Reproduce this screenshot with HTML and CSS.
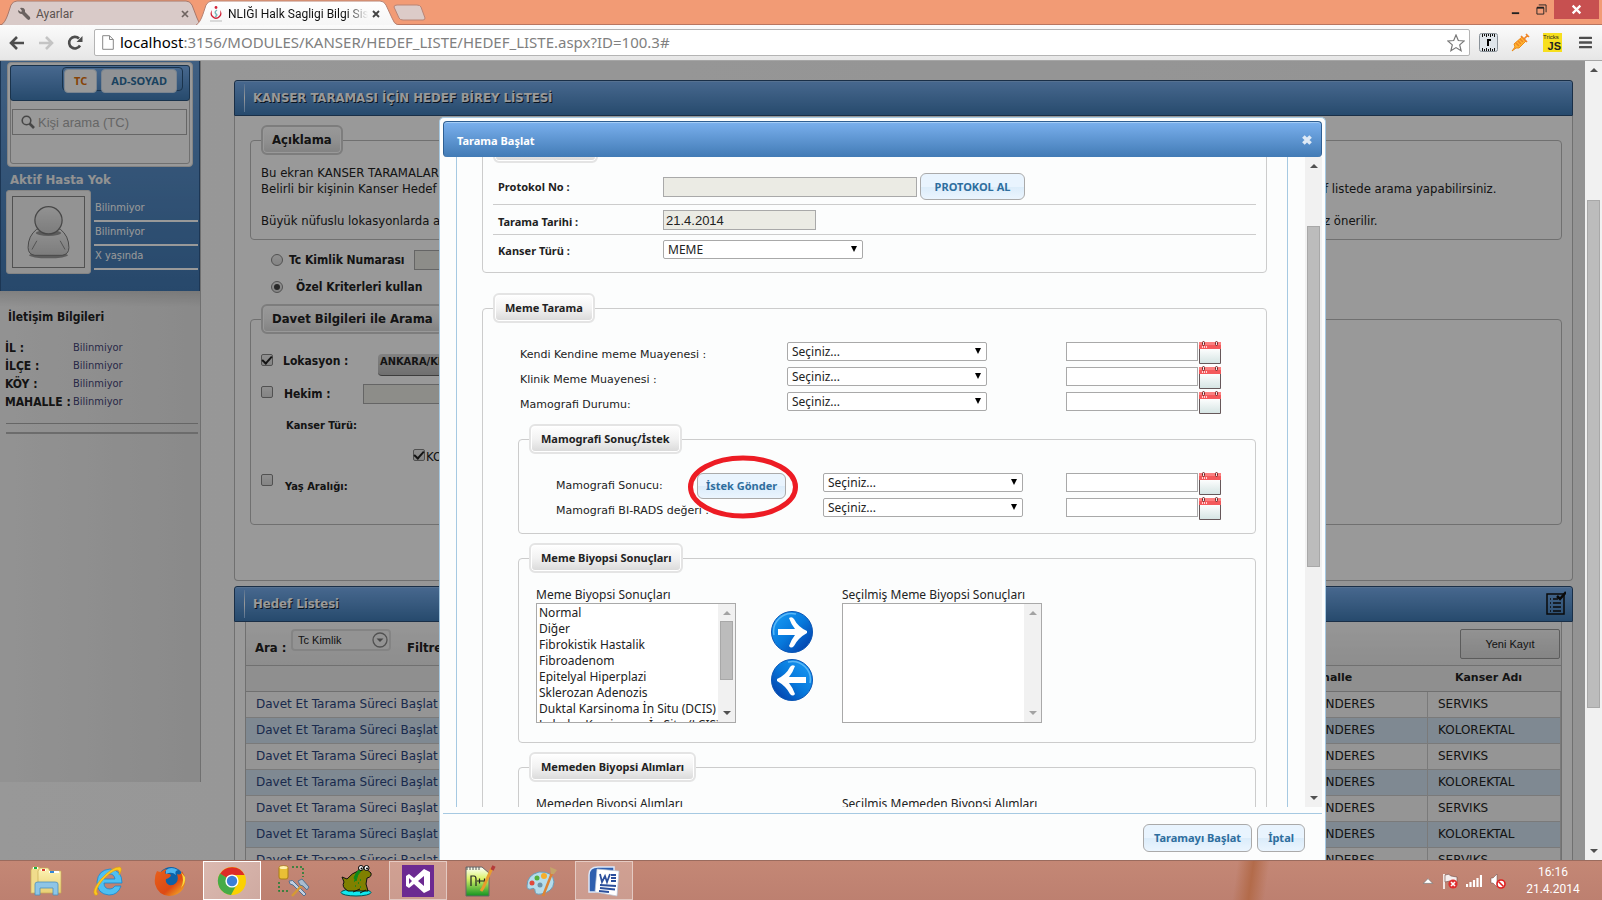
FILE: index.html
```html
<!DOCTYPE html>
<html lang="tr">
<head>
<meta charset="utf-8">
<title>Halk Sagligi Bilgi Sistemi</title>
<link rel="stylesheet" href="styles.css">
</head>
<body>
<svg class="defs" aria-hidden="true">
  <defs>
    <linearGradient id="gWhite" x1="0" y1="0" x2="0" y2="1"><stop offset="0" stop-color="#fff"/><stop offset="1" stop-color="#d3e3e2"/></linearGradient>
    <linearGradient id="gTab" x1="0" y1="0" x2="0" y2="1"><stop offset="0" stop-color="#fff"/><stop offset="1" stop-color="#f6f6f6"/></linearGradient>
    <linearGradient id="gBlue" x1="0" y1="0" x2="1" y2="1"><stop offset="0" stop-color="#1ba0f8"/><stop offset=".5" stop-color="#0779dc"/><stop offset="1" stop-color="#0334a0"/></linearGradient>
    <linearGradient id="gGreen" x1="0" y1="0" x2="0" y2="1"><stop offset="0" stop-color="#fff"/><stop offset=".4" stop-color="#d9f26a"/><stop offset="1" stop-color="#119320"/></linearGradient>
    <linearGradient id="gFolder" x1="0" y1="0" x2="0" y2="1"><stop offset="0" stop-color="#fdf3b4"/><stop offset="1" stop-color="#e8cf74"/></linearGradient>
    <linearGradient id="gFox" x1="0" y1="0" x2="1" y2="1"><stop offset="0" stop-color="#e8601c"/><stop offset=".6" stop-color="#dd4a14"/><stop offset="1" stop-color="#f9c52c"/></linearGradient>
    <linearGradient id="gMan" x1="0" y1="0" x2="0" y2="1"><stop offset="0" stop-color="#f4f4f4"/><stop offset="1" stop-color="#cfcfcf"/></linearGradient>
    <symbol id="calendar" viewBox="0 0 22 24">
      <rect x="1" y="7" width="20" height="16" fill="url(#gWhite)"/>
      <path d="M.5 7V22.500H21.500V7" fill="none" stroke="#66585a"/>
      <rect y="1" width="22" height="7" fill="#f4595b"/><rect y="1" width="22" height="3" fill="#fb7f7f"/>
      <path d="M3 6h1M5 6h1M7 6h1" stroke="#fff" stroke-width="1.500"/>
      <rect x="3.500" y=".5" width="2" height="4" rx="1" fill="#eee" stroke="#722"/><rect x="16.500" y=".5" width="2" height="4" rx="1" fill="#eee" stroke="#722"/>
    </symbol>
    <symbol id="arrow" viewBox="0 0 42 42">
      <circle cx="21" cy="21" r="20.500" fill="url(#gBlue)" stroke="#0a55b4"/>
      <path d="M3 24A18 18 0 0 1 25 3" fill="none" stroke="#6dc2fa" stroke-width="1.500" opacity=".8"/>
      <path d="M7 18H24Q20 13 18 7Q21 5 23 8Q27 16 36 20V22Q27 27 23 35Q20 38 18 35Q20 29 24 24H7Z" fill="#fff"/>
    </symbol>
  </defs>
</svg>

<header class="tabstrip">
  <div class="tab tab-idle">
    <svg class="tab-shape" viewBox="0 0 200 25" preserveAspectRatio="none"><path d="M1 25Q5 23 8 14L11 5Q13 1 17 1H186Q190 1 192 5L197 18Q199 24 202 25" fill="#d9cac8" stroke="#a87769"/></svg>
    <svg class="tab-icon" viewBox="0 0 14 14"><path d="M1 3L4 5 5 4 3 1Q7 0 8 3V5L13 10Q14 12 12 13Q11 13 10 12L5 7Q1 7 1 3Z" fill="#6b6260"/></svg>
    <span class="tab-title">Ayarlar</span>
    <button class="tab-close" aria-label="Sekmeyi kapat"><svg viewBox="0 0 8 8"><path d="M1 1L7 7M7 1L1 7" stroke="#6f6461" stroke-width="1.700"/></svg></button>
  </div>
  <div class="tab tab-active">
    <svg class="tab-shape" viewBox="0 0 202 25" preserveAspectRatio="none"><path d="M0 25Q4 23 7 14L10 5Q12 1 16 1H184Q188 1 190 5L196 18Q198 24 202 25" fill="url(#gTab)" stroke="#b78273"/></svg>
    <svg class="tab-icon" viewBox="0 0 14 16"><circle cx="7" cy="1.500" r="1.400" fill="#d5233a"/><path d="M3 4Q0 8 3 11Q7 15 11 11Q14 8 11 4Q12 8 10 10Q7 13 4 10Q2 8 3 4Z" fill="#cf1f35"/><path d="M8 4Q5 6 7 8Q9 9 6 11" fill="none" stroke="#7ab9b9" stroke-width="1.500"/><path d="M1 15H13" stroke="#bbb"/></svg>
    <span class="tab-title fade">NLIĞI Halk Sagligi Bilgi Sis</span>
    <button class="tab-close" aria-label="Sekmeyi kapat"><svg viewBox="0 0 8 8"><path d="M1 1L7 7M7 1L1 7" stroke="#444" stroke-width="1.900"/></svg></button>
  </div>
  <button class="newtab" aria-label="Yeni sekme"><svg viewBox="0 0 34 17"><path d="M4 1H24Q27 1 28 3L32 14Q32 16 30 16H10Q7 16 6 14L1 3Q1 1 4 1Z" fill="#dccbc8" stroke="#b98475"/></svg></button>
  <div class="win-controls">
    <button aria-label="Küçült"><svg viewBox="0 0 10 12"><path d="M1 10H9" stroke="#222" stroke-width="2"/></svg></button>
    <button aria-label="Önceki boyut"><svg viewBox="0 0 12 12"><path d="M1 4H8.500V11H1Z" fill="none" stroke="#222"/><path d="M1 4H8.500" stroke="#222" stroke-width="2"/><path d="M3 1H11V9" fill="none" stroke="#222"/></svg></button>
    <button class="win-close" aria-label="Kapat"><svg viewBox="0 0 10 10"><path d="M1.500 1.500L8.500 8.500M8.500 1.500L1.500 8.500" stroke="#fff" stroke-width="2"/></svg></button>
  </div>
</header>

<nav class="toolbar">
  <button aria-label="Geri"><svg viewBox="0 0 16 14"><path d="M8 1L2 7L8 13M2 7H15" fill="none" stroke="#4d4d4d" stroke-width="2.600"/></svg></button>
  <button aria-label="İleri"><svg viewBox="0 0 16 14"><path d="M8 1L14 7L8 13M14 7H1" fill="none" stroke="#c4c4c4" stroke-width="2.600"/></svg></button>
  <button aria-label="Yenile"><svg viewBox="0 0 16 16"><path d="M13 10.500A5.800 5.800 0 1 1 12 3.500" fill="none" stroke="#4d4d4d" stroke-width="2.600"/><path d="M15.500 1V7H9.500Z" fill="#4d4d4d"/></svg></button>
  <div class="omnibox">
    <svg class="page-icon" viewBox="0 0 12 15"><path d="M.7.7H7.500L11.300 4.500V14.300H.7ZM7.500.7V4.500H11.300" fill="#fff" stroke="#888"/></svg>
    <label class="url" for="url"><b>localhost</b>:3156/MODULES/KANSER/HEDEF_LISTE/HEDEF_LISTE.aspx?ID=100.3#</label>
    <input id="url" class="url-input" aria-label="Adres">
    <svg class="star" viewBox="0 0 18 18"><path d="M9 1L11.300 6.500L17.200 7L12.700 10.900L14.100 16.700L9 13.600L3.900 16.700L5.300 10.900L.8 7L6.700 6.500Z" fill="#fff" stroke="#777" stroke-width="1.200"/></svg>
  </div>
  <button class="ext" aria-label="Cetvel"><svg viewBox="0 0 19 19"><rect x=".5" y=".5" width="18" height="18" rx="2" fill="#dfe5ea" stroke="#8a9299"/><path d="M3.500 1v3M5.500 1v2M7.500 1v3M9.500 1v2M11.500 1v3M13.500 1v2M15.500 1v3M3.500 15v3M5.500 16v2M7.500 15v3M9.500 16v2M11.500 15v3M13.500 16v2M15.500 15v3" stroke="#111"/><path d="M8 7h4M9 6v7" stroke="#000" stroke-width="2"/></svg></button>
  <button class="ext" aria-label="Şırınga"><svg viewBox="0 0 19 19"><path d="M1 18L4 14L3 11L11 4L15 8L8 15L5 15Z" fill="#ffb52f" stroke="#e98a1a"/><path d="M10 3L16 9M13 6L17 2M15 1L18 4M5 10L8 13M7 8L10 11M9 6L12 9" stroke="#f08527" stroke-width="1.600"/></svg></button>
  <span class="ext jsext"><i>Tricks</i><b>JS</b></span>
  <button class="ext menu" aria-label="Menü"><svg viewBox="0 0 14 14"><path d="M1 2H13M1 7H13M1 12H13" stroke="#4d4d4d" stroke-width="2.600" stroke-linecap="round"/></svg></button>
</nav>

<div class="viewport">
<div class="page">
  <aside class="sidebar">
    <section class="patient">
      <div class="search-card">
        <div class="search-inner">
          <div class="search-head"><div class="search-tabs"><button class="on">TC</button><button>AD-SOYAD</button></div></div>
          <div class="search-field">
            <svg viewBox="0 0 14 14"><circle cx="5.500" cy="5.500" r="4.300" fill="none" stroke="#777" stroke-width="1.600"/><path d="M8.500 8.500L13 13" stroke="#777" stroke-width="2.600"/></svg>
            <input placeholder="Kişi arama (TC)" aria-label="Kişi arama">
          </div>
        </div>
      </div>
      <h2>Aktif Hasta Yok</h2>
      <div class="patient-row">
        <div class="photo"><svg viewBox="0 0 72 72"><ellipse cx="36" cy="60" rx="20" ry="3" fill="#999"/><path d="M24 33Q15 40 15 52Q15 59 22 60H50Q57 59 57 52Q57 40 48 33Z" fill="url(#gMan)" stroke="#777"/><path d="M19 54L24 45M53 54L48 45" stroke="#888"/><ellipse cx="36" cy="37" rx="13" ry="3" fill="#999"/><circle cx="36" cy="24" r="14" fill="url(#gMan)" stroke="#777" stroke-width="1.300"/></svg></div>
        <ul><li>Bilinmiyor</li><li>Bilinmiyor</li><li>X yaşında</li></ul>
      </div>
    </section>
    <section class="contact">
      <h3>İletişim Bilgileri</h3>
      <dl>
        <dt>İL :</dt><dd>Bilinmiyor</dd>
        <dt>İLÇE :</dt><dd>Bilinmiyor</dd>
        <dt>KÖY :</dt><dd>Bilinmiyor</dd>
        <dt>MAHALLE :</dt><dd>Bilinmiyor</dd>
      </dl>
      <div class="rules"></div>
    </section>
  </aside>

  <main class="main">
    <h1 class="bar">KANSER TARAMASI İÇİN HEDEF BİREY LİSTESİ</h1>
    <section class="panel">
      <fieldset class="fs about">
        <legend>Açıklama</legend>
        <p><span>Bu ekran KANSER TARAMALARI</span></p>
        <p><span>Belirli bir kişinin Kanser Hedef li</span><span>f listede arama yapabilirsiniz.</span></p>
        <p class="spaced"><span>Büyük nüfuslu lokasyonlarda ara</span><span>z önerilir.</span></p>
      </fieldset>
      <div class="radios">
        <div class="radio-row"><input type="radio" name="k" id="r1"><label for="r1">Tc Kimlik Numarası</label><input class="dis" aria-label="Tc Kimlik Numarası" readonly></div>
        <div class="radio-row second"><input type="radio" name="k" id="r2" checked><label for="r2">Özel Kriterleri kullan</label></div>
      </div>
      <fieldset class="fs invite">
        <legend>Davet Bilgileri ile Arama</legend>
        <div class="crit lok"><input type="checkbox" id="c1" checked><label for="c1">Lokasyon :</label><button>ANKARA/KE</button></div>
        <div class="crit hek"><input type="checkbox" id="c2"><label for="c2">Hekim :</label><input class="dis" aria-label="Hekim" readonly></div>
        <div class="crit kan"><b>Kanser Türü:</b></div>
        <div class="crit kol"><input type="checkbox" id="c3" checked><label for="c3">KO</label></div>
        <div class="crit yas"><input type="checkbox" id="c4"><label for="c4">Yaş Aralığı:</label></div>
      </fieldset>
    </section>

    <h1 class="bar list-bar">Hedef Listesi
      <svg viewBox="0 0 20 24"><path d="M1 3H18V23H1Z" fill="none" stroke="#111" stroke-width="1.500"/><path d="M4 8h1M4 12h1M4 16h1M4 20h1M7 8h5M7 12h8M7 16h8M7 20h8" stroke="#111" stroke-width="1.500"/><path d="M11 5L14 8L20 1" fill="none" stroke="#111" stroke-width="2.500"/></svg>
    </h1>
    <section class="panel list-panel">
      <div class="grid-box">
        <div class="grid-tools">
          <label for="ara">Ara :</label>
          <span class="round-select"><select id="ara"><option>Tc Kimlik</option></select><svg viewBox="0 0 16 16"><circle cx="8" cy="8" r="7" fill="none" stroke="#888" stroke-width="1.300"/><path d="M4.500 6.500H11.500L8 10Z" fill="#777"/></svg></span>
          <b>Filtre</b>
          <button>Yeni Kayıt</button>
        </div>
        <table>
          <thead><tr><th></th><th class="c-mah">Mahalle</th><th class="c-kan">Kanser Adı</th></tr></thead>
          <tbody>
            <tr><td><a href="#">Davet Et</a> <a href="#">Tarama Süreci Başlat</a></td><td>MENDERES</td><td>SERVIKS</td></tr>
            <tr><td><a href="#">Davet Et</a> <a href="#">Tarama Süreci Başlat</a></td><td>MENDERES</td><td>KOLOREKTAL</td></tr>
            <tr><td><a href="#">Davet Et</a> <a href="#">Tarama Süreci Başlat</a></td><td>MENDERES</td><td>SERVIKS</td></tr>
            <tr><td><a href="#">Davet Et</a> <a href="#">Tarama Süreci Başlat</a></td><td>MENDERES</td><td>KOLOREKTAL</td></tr>
            <tr><td><a href="#">Davet Et</a> <a href="#">Tarama Süreci Başlat</a></td><td>MENDERES</td><td>SERVIKS</td></tr>
            <tr><td><a href="#">Davet Et</a> <a href="#">Tarama Süreci Başlat</a></td><td>MENDERES</td><td>KOLOREKTAL</td></tr>
            <tr><td><a href="#">Davet Et</a> <a href="#">Tarama Süreci Başlat</a></td><td>MENDERES</td><td>SERVIKS</td></tr>
          </tbody>
        </table>
      </div>
    </section>
  </main>

  <div class="overlay"></div>

  <div class="dialog" role="dialog" aria-labelledby="dlg">
    <div class="dlg-title"><h2 id="dlg">Tarama Başlat</h2><button aria-label="Kapat"><svg viewBox="0 0 10 10"><path d="M2 2L8 8M8 2L2 8" stroke="#dfeaf6" stroke-width="3"/></svg></button></div>
    <div class="dlg-body">
      <div class="dlg-content">
        <fieldset class="fs general">
          <legend></legend>
          <div class="g-row first"><label for="pn">Protokol No :</label><input id="pn" class="dis w255" readonly><button class="btn">PROTOKOL AL</button></div>
          <div class="g-row"><label for="tt">Tarama Tarihi :</label><input id="tt" class="dis w153" value="21.4.2014" readonly></div>
          <div class="g-row last"><label for="kt">Kanser Türü :</label><span class="sel"><select id="kt"><option>MEME</option></select></span></div>
        </fieldset>

        <fieldset class="fs scan">
          <legend>Meme Tarama</legend>
          <div class="s-row"><label for="s1">Kendi Kendine meme Muayenesi :</label><span class="sel"><select id="s1"><option>Seçiniz...</option></select></span><span class="date"><input aria-label="Tarih 1"><svg><use href="#calendar"/></svg></span></div>
          <div class="s-row"><label for="s2">Klinik Meme Muayenesi :</label><span class="sel"><select id="s2"><option>Seçiniz...</option></select></span><span class="date"><input aria-label="Tarih 2"><svg><use href="#calendar"/></svg></span></div>
          <div class="s-row"><label for="s3">Mamografi Durumu:</label><span class="sel"><select id="s3"><option>Seçiniz...</option></select></span><span class="date"><input aria-label="Tarih 3"><svg><use href="#calendar"/></svg></span></div>

          <fieldset class="fs sub mammo">
            <legend>Mamografi Sonuç/İstek</legend>
            <div class="s-row"><div class="with-btn"><label for="s4">Mamografi Sonucu:</label><button class="btn">İstek Gönder</button></div><span class="sel"><select id="s4"><option>Seçiniz...</option></select></span><span class="date"><input aria-label="Tarih 4"><svg><use href="#calendar"/></svg></span></div>
            <div class="s-row"><label for="s5">Mamografi BI-RADS değeri :</label><span class="sel"><select id="s5"><option>Seçiniz...</option></select></span><span class="date"><input aria-label="Tarih 5"><svg><use href="#calendar"/></svg></span></div>
            <svg class="mark" viewBox="0 0 112 64"><ellipse cx="56" cy="32" rx="52.500" ry="29" fill="none" stroke="#ed1c24" stroke-width="5"/></svg>
          </fieldset>

          <fieldset class="fs sub biopsy">
            <legend>Meme Biyopsi Sonuçları</legend>
            <div class="picker">
              <div class="pick-col">
                <label for="l1">Meme Biyopsi Sonuçları</label>
                <div class="listbox">
                  <select id="l1" multiple size="8"><option>Normal</option><option>Diğer</option><option>Fibrokistik Hastalik</option><option>Fibroadenom</option><option>Epitelyal Hiperplazi</option><option>Sklerozan Adenozis</option><option>Duktal Karsinoma İn Situ (DCIS)</option><option>Lobuler Karsinoma İn Situ (LCIS)</option></select>
                  <div class="sb"><i class="up pale"></i><span class="thumb h59"></span><i class="down"></i></div>
                </div>
              </div>
              <div class="pick-btns">
                <button aria-label="Ekle"><svg><use href="#arrow"/></svg></button>
                <button aria-label="Çıkar" class="back"><svg><use href="#arrow"/></svg></button>
              </div>
              <div class="pick-col">
                <label for="l2">Seçilmiş Meme Biyopsi Sonuçları</label>
                <div class="listbox"><select id="l2" multiple size="8"></select><div class="sb"><i class="up pale"></i><i class="down pale"></i></div></div>
              </div>
            </div>
          </fieldset>

          <fieldset class="fs sub biopsy">
            <legend>Memeden Biyopsi Alımları</legend>
            <div class="picker">
              <div class="pick-col"><label>Memeden Biyopsi Alımları</label></div>
              <div class="pick-btns"></div>
              <div class="pick-col"><label>Seçilmiş Memeden Biyopsi Alımları</label></div>
            </div>
          </fieldset>
        </fieldset>
      </div>
      <div class="sb dlg-sb"><i class="up"></i><span class="thumb"></span><i class="down"></i></div>
    </div>
    <div class="dlg-foot"><button class="btn">Taramayı Başlat</button><button class="btn">İptal</button></div>
  </div>
</div>
<div class="sb page-sb"><i class="up"></i><span class="thumb"></span><i class="down"></i></div>
</div>

<footer class="taskbar">
  <button aria-label="Dosya Gezgini"><svg viewBox="0 0 32 32"><path d="M1 5L3 2H9L11 4V28H1Z" fill="#f0dc8c" stroke="#c9ad55" stroke-width=".7"/><path d="M8 6L10 3H18L20 6H31V28H8Z" fill="url(#gFolder)" stroke="#c9ad55" stroke-width=".7"/><path d="M3 3h5M11 5h5M19 7h10" stroke="#fff" stroke-width="2"/><path d="M4 3h3" stroke="#1fae3c" stroke-width="2"/><path d="M12 5h3" stroke="#d8402e" stroke-width="2"/><path d="M20 7h4" stroke="#2f86d8" stroke-width="2"/><path d="M5 19Q5 17 8 17H25Q28 17 28 19V30H23V23H10V30H5Z" fill="#8ec5e6" stroke="#4c8fbb" stroke-width=".8"/></svg></button>
  <button aria-label="Internet Explorer"><svg viewBox="0 0 32 32"><path d="M30 18H12Q12 24 18 24Q21 24 23 21H29Q26 30 17 30Q5 29 5 17Q6 5 18 4Q30 5 30 18ZM12 14H23Q22 9 18 9Q13 9 12 14Z" fill="#4fc0f2" stroke="#1787cf" stroke-width=".8"/><path d="M3 30Q-1 26 9 14Q21 1 28 2Q31 4 27 10Q28 5 25 5Q19 6 10 16Q2 26 6 29Q4 31 3 30Z" fill="#fbc81f" stroke="#dd9a0d" stroke-width=".6"/></svg></button>
  <button aria-label="Firefox"><svg viewBox="0 0 32 32"><circle cx="17" cy="15" r="13" fill="#0d62a8"/><path d="M12 5Q17 1 24 5Q20 6 22 10Q18 6 12 9Z" fill="#4db4ee"/><path d="M3 6Q5 7 7 7Q10 4 13 4Q10 7 12 9Q15 8 17 10Q16 13 12 14Q11 18 15 20Q19 21 22 18Q25 15 23 9Q27 11 28 6Q34 15 29 24Q24 31 15 31Q4 30 1 19Q0 11 3 6Z" fill="url(#gFox)"/><path d="M27 7Q31 15 27 23Q32 18 31 12Z" fill="#fbd93b"/></svg></button>
  <button class="open lit" aria-label="Chrome"><svg viewBox="0 0 32 32"><circle cx="16" cy="16" r="14" fill="#fbd102"/><path d="M16 16L4 9A14 14 0 0 1 28.500 10H16Z" fill="#dd2c27"/><path d="M16 16L4 8.500A14 14 0 0 0 15 30L21 19Z" fill="#46ab47"/><circle cx="16" cy="16" r="6.600" fill="#fff"/><circle cx="16" cy="16" r="5.200" fill="#3b7fd6"/></svg></button>
  <button aria-label="Araçlar"><svg viewBox="0 0 32 32"><rect x="1" y="1" width="9" height="13" rx="2" fill="#e9bf35" stroke="#a97e16"/><ellipse cx="5.500" cy="2.500" rx="4" ry="1.500" fill="#fff2b0"/><path d="M14 2H25V12M1 17V26H12" fill="none" stroke="#168030" stroke-width="1.500" stroke-dasharray="2 2"/><path d="M11 16Q15 14 17 18L28 29L26 31L15 20Q11 20 11 16Z" fill="#bfd0e2" stroke="#56708d"/><path d="M25 19L14 31" stroke="#d59a34" stroke-width="2.500"/><path d="M20 16L24 14L31 22L29 25L25 21L22 20Z" fill="#a8bcd0" stroke="#56708d"/></svg></button>
  <button aria-label="Kurbağa"><svg viewBox="0 0 32 32"><ellipse cx="16" cy="27.500" rx="15" ry="3.500" fill="#12e8ee" stroke="#055"/><path d="M2 12L7 14Q12 8 18 6Q20 1 25 3L31 8Q32 12 27 13L26 19L28 26H8Q1 22 4 17Z" fill="#808000" stroke="#111"/><path d="M14 13Q16 7 19 5L21 6Q17 9 16 16Z" fill="#0a8a1a" stroke="#0a8a1a"/><path d="M14 16h1M18 18h1M15 21h1M20 15h1M20 22h1" stroke="#0a8a1a" stroke-width="1.500"/><circle cx="21" cy="3" r="2.500" fill="#fff" stroke="#000"/><circle cx="26.500" cy="3" r="2.500" fill="#fff" stroke="#000"/><circle cx="21.500" cy="3.500" r="1"/><circle cx="27" cy="3.500" r="1"/><path d="M13 27L20 24M20 28L26 25" stroke="#111"/></svg></button>
  <button class="open" aria-label="Visual Studio"><svg viewBox="0 0 32 32"><rect width="32" height="32" fill="#6c2a91"/><path d="M22 4L28 7V25L22 28L12 19L7 23L4 21V11L7 9L12 13ZM22 11L16 16L22 21ZM7 13V19L10 16Z" fill="#fff" fill-rule="evenodd"/></svg></button>
  <button class="npp" aria-label="Notepad++"><svg viewBox="0 0 32 32"><path d="M2 2H18L25 8V31H2Z" fill="url(#gGreen)" stroke="#666"/><path d="M3 2v3M6 2v3M9 2v3M12 2v3M15 2v3" stroke="#555"/><path d="M7 21V11H10Q12 11 12 14V21M13 16h5M15.500 13.500v5M18 16h4M20.500 13.500v5" fill="none" stroke="#222" stroke-width="1.200"/><path d="M28 3L19 23L17 26" fill="none" stroke="#e89c2d" stroke-width="3"/><path d="M30 1L28 5" stroke="#b33b3b" stroke-width="3.500"/></svg></button>
  <button aria-label="Paint"><svg viewBox="0 0 32 32"><path d="M1 21Q1 10 13 7Q27 6 28 17Q27 27 15 29Q9 30 9 26Q9 22 5 24Q1 25 1 21Z" fill="#b5dcec" stroke="#6b9cb7"/><circle cx="6" cy="18" r="2.500" fill="#e0483c"/><circle cx="11" cy="13" r="2.500" fill="#55b03c"/><circle cx="18" cy="11" r="3" fill="#f6ae2c"/><circle cx="14" cy="20" r="2.500" fill="#6d93a9"/><path d="M26 8L17 31" stroke="#dd8334" stroke-width="2.500"/><path d="M25 9L24 2L31 5L28 9Z" fill="#c5a46a"/></svg></button>
  <button class="open" aria-label="Word"><svg viewBox="0 0 32 32"><path d="M1 27V10Q1 2 10 2H26V27Z" fill="#2f5fae" stroke="#dce8fa" stroke-width="1.500"/><path d="M9 4L31 6L29 31L7 27Z" fill="#fff" stroke="#b9c4d6" stroke-width=".7"/><path d="M12 9L14 17L17 11L19 17L22 9M23 10h5M23 13h5M23 16h5M12 20L28 21M12 23L27 24.500M11 26L21 27" fill="none" stroke="#2b4f9c" stroke-width="1.800"/></svg></button>
  <div class="tray">
    <svg class="t12" viewBox="0 0 10 8"><path d="M1 6H9L5 2Z" fill="#fff" stroke="#777" stroke-width=".6"/></svg>
    <svg class="t16" viewBox="0 0 16 16"><path d="M2 1V16" stroke="#fff" stroke-width="1.600"/><path d="M3 2Q7 0 9 3L15 4V10Q10 11 8 8L3 9Z" fill="#f5eeee" stroke="#6b4a44" stroke-width=".6"/><circle cx="11" cy="11" r="4.600" fill="#df2f2f"/><path d="M9 9L13 13M13 9L9 13" stroke="#fff" stroke-width="1.600"/></svg>
    <svg class="t16" viewBox="0 0 16 16"><path d="M1 14v-3M4.500 14v-5M8 14V7M11.500 14V5M15 14V2" stroke="#fff" stroke-width="2.200"/></svg>
    <svg class="t16" viewBox="0 0 16 16"><path d="M1 5H3L7 1V14L3 10H1Z" fill="#fff" stroke="#6b4a44" stroke-width=".5"/><circle cx="11" cy="11" r="4" fill="#fff" stroke="#df2020" stroke-width="1.600"/><path d="M8.500 8.500L13.500 13.500" stroke="#df2020" stroke-width="1.600"/></svg>
    <div class="clock"><span>16:16</span><span>21.4.2014</span></div>
  </div>
</footer>
</body>
</html>
```

FILE: styles.css
```css
:root {
  --tahoma: "DejaVu Sans Condensed", "Noto Sans", sans-serif;
  --verdana: "DejaVu Sans", sans-serif;
  --ui: "Noto Sans", "Open Sans", sans-serif;
  --arial: "Liberation Sans", Arial, sans-serif;
}
* { box-sizing: border-box; }
body {
  margin: 0;
  height: 100vh;
  display: flex;
  flex-direction: column;
  overflow: hidden;
  font: 12px/16px var(--ui);
  color: #222;
  background: #fff;
}
button, input, select { font: inherit; color: inherit; margin: 0; }
button { padding: 0; border: 0; background: none; }
h1, h2, h3, p, ul, dl, dd { margin: 0; padding: 0; }
svg { display: block; }
.defs { position: absolute; width: 0; height: 0; }

/* Browser frame */
.tabstrip { display: flex; height: 25px; background: #f29b75; border-bottom: 1px solid #b97660; flex: none; }
.tab { position: relative; display: flex; align-items: center; width: 200px; height: 25px; padding: 2px 11px 0 17px; }
.tab-active { width: 202px; margin-left: -4px; padding: 2px 18px 0 13px; color: #111; }
.tab-idle { color: #5b5350; }
.tab-shape { position: absolute; left: 0; top: 0; width: 100%; height: 25px; }
.tab-icon { position: relative; width: 14px; height: 16px; flex: none; }
.tab-title { position: relative; flex: 1; margin-left: 5px; font: 12px/16px Roboto, sans-serif; white-space: nowrap; overflow: hidden; }
.fade { -webkit-mask-image: linear-gradient(90deg, #000 85%, transparent); mask-image: linear-gradient(90deg, #000 85%, transparent); }
.tab-close { position: relative; width: 8px; height: 8px; margin-left: 4px; }
.newtab { width: 34px; height: 17px; margin: 4px 0 0 -5px; }
.win-controls { display: flex; margin-left: auto; padding-right: 3px; }
.win-controls button { width: 26px; height: 19px; display: flex; align-items: center; justify-content: center; }
.win-controls svg { width: 11px; height: 11px; }
.win-controls .win-close { width: 45px; background: #c75050; }

.toolbar { display: flex; align-items: center; height: 36px; padding: 0 10px 0 9px; flex: none; background: linear-gradient(#fbfbfb, #e6e6e6); border-bottom: 1px solid #a5a5a5; }
.toolbar > button { width: 16px; height: 16px; margin-right: 13px; display: flex; align-items: center; }
.toolbar > button svg { width: 16px; }
.omnibox { flex: 1; display: flex; align-items: center; height: 27px; border: 1px solid #b4b4b4; border-radius: 2px; background: #fff; padding: 0 4px 0 7px; margin: 0 9px 0 -2px; min-width: 0; }
.page-icon { width: 12px; height: 15px; }
.url { font-size: 15px; color: #808080; margin-left: 6px; white-space: nowrap; line-height: 18px; padding-bottom: 2px; }
.url b { font-weight: 400; color: #000; }
.url-input { flex: 1; min-width: 0; border: 0; outline: 0; background: none; }
.star { width: 18px; height: 18px; }
.toolbar > .ext { width: 19px; height: 19px; margin-right: 13px; flex: none; }
.toolbar > .ext svg { width: 19px; }
.jsext { background: #f7df1e; color: #222; display: flex; flex-direction: column; align-items: flex-end; }
.jsext i { font: 6px/8px var(--arial); align-self: flex-start; }
.jsext b { font: bold 11px/11px var(--arial); padding-right: 1px; }
.toolbar > .menu { width: 13px; margin: 0 0 0 4px; }
.toolbar > .menu svg { width: 13px; }

/* Page area */
.viewport { flex: 1; display: flex; min-height: 0; }
.page { flex: 1; min-width: 0; position: relative; display: flex; align-items: flex-start; overflow: hidden; background: linear-gradient(90deg, #fdfdfd, #f6f6f6); }
.overlay { position: absolute; inset: 0; background: rgba(0, 0, 0, .4); }

.sb { width: 17px; flex: none; display: flex; flex-direction: column; align-items: center; background: #f1f1f1; padding: 7px 0; }
.sb i { width: 0; height: 0; border: 4px solid transparent; }
.sb .up { border-top: 0; border-bottom-color: #505050; }
.sb .down { border-bottom: 0; border-top-color: #505050; margin-top: auto; }
.sb .up.pale { border-bottom-color: #a3a3a3; }
.sb .down.pale { border-top-color: #a3a3a3; }
.thumb { width: 13px; background: #bcbcbc; border: 1px solid #a8a8a8; }
.page-sb .thumb { height: 508px; margin-top: 128px; }
.dlg-sb .thumb { height: 341px; margin-top: 58px; }
.thumb.h59 { height: 59px; margin-top: 6px; }

/* Sidebar */
.sidebar { width: 201px; height: 721px; flex: none; background: linear-gradient(90deg, #f4f4f4, #e6e6e6); border-right: 1px solid #bbb; font-family: var(--tahoma); }
.patient { height: 230px; padding: 1px 1px 0 6px; border: 1px solid #2f5a8c; border-width: 0 1px; background: linear-gradient(#6a9fd9, #4279b3); }
.search-card { margin-right: 5px; height: 105px; padding: 2px; background: #fff; border: 1px solid #ddd; border-radius: 4px; }
.search-inner { height: 100%; border: 1px solid #bbb; border-radius: 3px; background: #fdfdfd; }
.search-head { height: 36px; margin: -1px; padding: 1px 6px 0 0; display: flex; justify-content: flex-end; background: linear-gradient(#78aeee, #417cb6); border: 1px solid #2c567f; border-radius: 3px; }
.search-tabs { display: flex; gap: 4px; padding: 1px 5px 0 1px; height: 24px; border: 1px solid #2c567f; border-radius: 4px; }
.search-tabs button { height: 24px; padding: 0 9px; background: #f0f4f8; border: 1px solid #cde; border-radius: 4px; font: bold 11px/20px var(--ui); color: #2e6e9e; }
.search-tabs .on { color: #e17009; background: #fff; }
.search-field { display: flex; align-items: center; margin: 9px 2px 0 1px; height: 26px; border: 1px solid #aaa; padding-left: 8px; background: #fff; }
.search-field svg { width: 14px; height: 14px; }
.search-field input { flex: 1; min-width: 0; border: 0; padding: 0 0 0 3px; background: none; font: 13px var(--arial); }
.search-field input::placeholder { color: #aaa; }
.patient h2 { font-size: 13px; line-height: 16px; padding: 5px 0 2px 3px; color: #f4f4f4; }
.patient-row { display: flex; gap: 3px; }
.photo { width: 85px; height: 84px; padding: 5px; background: #f6f6f6; border: 1px solid #ddd; border-radius: 3px; margin-left: -1px; }
.photo svg { width: 73px; height: 72px; border: 1px solid #888; }
.patient ul { flex: 1; list-style: none; color: #fff; font-size: 11px; padding-top: 8px; }
.patient li { height: 24px; line-height: 20px; padding-left: 1px; border-bottom: 2px solid #fff; }
.contact { background: linear-gradient(rgba(0, 0, 0, .12), transparent 16px); padding: 17px 2px 0 5px; }
.contact h3 { font-size: 12px; line-height: 18px; padding-left: 3px; margin-bottom: 13px; }
.contact dl { display: grid; grid-template-columns: 68px 1fr; font-size: 12px; line-height: 18px; }
.contact dt { font-weight: 700; white-space: nowrap; }
.contact dd { font-size: 11px; color: #447; }
.rules { height: 11px; margin: 12px 0 0 1px; border-top: 1px solid #aaa; border-bottom: 2px solid #b4b4b4; }

/* Main column */
.main { flex: 1; min-width: 0; padding: 19px 12px 0 33px; }
.bar { height: 36px; padding: 0 6px 0 18px; display: flex; align-items: center; justify-content: space-between; font: bold 13px/16px var(--tahoma); color: #fff; text-shadow: 1px 1px #123; background: linear-gradient(#78aeee, #417cb6); border: 1px solid #2c4f77; border-radius: 3px 3px 0 0; box-shadow: inset 0 1px #8fbdf0; }
.bar::before { content: ""; align-self: stretch; width: 1px; margin: 3px 8px 3px -9px; background: linear-gradient(#8fbdf0, #fff, #8fbdf0); }
.bar svg { width: 20px; height: 24px; margin: -2px 0 0 auto; }
.bar { justify-content: flex-start; }
.panel { border: 1px solid #bbb; border-top: 0; border-radius: 0 0 4px 4px; background: #fff; padding: 9px 10px 55px 15px; font-family: var(--tahoma); }

.fs { margin: 0; min-width: 0; border: 1px solid #ccc; border-radius: 4px; padding: 0 10px; }
.fs > legend { height: 30px; padding: 0 10px; border: 2px solid #e4e4e4; border-radius: 6px; background: linear-gradient(#fff, #f2f2f2 50%, #d9d9d9); font: bold 11px/26px var(--ui); box-shadow: inset 0 0 0 1px #fff; }
.panel .fs { border-color: #bbb; }
.panel .fs > legend { font: bold 13px/26px var(--tahoma); padding: 0 9px; border-color: #d0d0d0; }
.about { padding: 10px 10px 10px; font-size: 13px; }
.about p { display: grid; grid-template-columns: 1fr 227px; white-space: nowrap; }
.about .spaced { margin-top: 16px; }
.radios { padding: 8px 0 2px 21px; font-size: 12px; }
.radio-row { display: flex; align-items: center; height: 24px; }
.radio-row.second { height: 30px; }
.radio-row.second label { padding-left: 13px; }
.radio-row label { font-weight: 700; padding-left: 6px; width: 131px; white-space: nowrap; }
input[type=radio], input[type=checkbox] { appearance: none; width: 12px; height: 12px; margin: 0; flex: none; background: linear-gradient(#f0f0f0, #dcdcdc); border: 1px solid #888; border-radius: 2px; display: grid; place-items: center; }
input[type=radio] { border-radius: 50%; }
input[type=radio]:checked::after { content: ""; width: 6px; height: 6px; border-radius: 50%; background: #444; }
input[type=checkbox]:checked::after { content: ""; width: 8px; height: 4px; border: solid #222; border-width: 0 0 2px 2px; transform: rotate(-48deg); margin-bottom: 3px; }
.dis { background: #ebebe4; border: 1px solid #a9a9a9; height: 20px; padding: 0 2px; }
.invite { padding: 20px 10px 29px; font-size: 12px; }
.crit { display: flex; }
.crit label { font-weight: 700; }
.lok { height: 30px; line-height: 14px; }
.lok label { padding-left: 10px; width: 105px; }
.lok button { height: 22px; padding: 0 2px 6px; background: linear-gradient(#d8d8d8, #bbb); border-bottom: 1px solid #666; border-radius: 4px; font: bold 11px/14px var(--tahoma); }
.hek { height: 34px; align-items: flex-start; line-height: 20px; }
.hek input[type=checkbox] { margin-top: 2px; }
.hek label { padding-left: 11px; width: 90px; }
.kan { height: 30px; padding-left: 25px; font-size: 11px; }
.kol { height: 24px; padding-left: 152px; }
.kol input { margin-top: 1px; }
.kol label { font-weight: 400; font-size: 13px; line-height: 18px; padding-left: 1px; }
.yas { font-size: 11px; }
.yas input { margin-top: 2px; }
.yas label { padding: 7px 0 0 12px; }

.list-bar { margin-top: 5px; }
.list-panel { padding: 0 10px; border-radius: 0; }
.grid-box { border: 1px solid #bbb; border-top: 0; font-family: var(--verdana); }
.grid-tools { height: 44px; display: flex; align-items: center; padding: 0 1px 0 9px; background: linear-gradient(#fbfbfb, #ececec); border-bottom: 1px solid #bbb; font: bold 13px/16px var(--tahoma); }
.grid-tools label { width: 36px; padding-top: 8px; }
.round-select { display: flex; align-items: center; width: 100px; height: 22px; margin: -7px 16px 0 0; border: 2px solid #ddd; border-radius: 4px; background: #f6f6f6; padding-right: 1px; }
.round-select select { appearance: none; flex: 1; border: 0; background: none; font: 11px var(--arial); padding-left: 5px; }
.round-select svg { width: 16px; height: 16px; }
.grid-tools b { padding-top: 8px; }
.grid-tools button { margin-left: auto; width: 100px; height: 30px; border: 1px solid #999; border-radius: 2px; background: linear-gradient(#f4f4f4, #ddd); font: 11px var(--arial); }
table { width: 100%; table-layout: fixed; border-collapse: collapse; font-size: 12px; }
th { height: 25px; padding: 0 11px 0 0; font-size: 11px; background: #efefef; border-bottom: 1px solid #bbb; }
.c-mah { width: 188px; }
.c-kan { width: 133px; }
td { height: 26px; padding: 0 10px; background: #f8f8f8; border-bottom: 1px solid #ccc; white-space: nowrap; }
td + td { border-right: 1px solid #ccc; }
td:nth-child(2) { padding-left: 68px; }
tr:nth-child(even) td { background: #d4e5f3; }
td a { color: #2b4680; text-decoration: none; }

/* Dialog */
.dialog { position: absolute; left: 439px; top: 56px; bottom: 0; width: 887px; padding: 3px 3px 0; display: flex; flex-direction: column; background: #fcfdfd; border: 1px solid #a6c9e2; border-bottom: 0; border-radius: 5px 5px 0 0; }
.dlg-title { height: 36px; flex: none; display: flex; align-items: center; justify-content: space-between; padding: 2px 8px 0 13px; color: #fff; background: linear-gradient(#7ab0ee, #427bb5); border: 1px solid #2f5f92; border-bottom: 0; border-radius: 4px; box-shadow: inset 0 1px #a5cdf5; }
.dlg-title h2 { font-size: 11px; }
.dlg-title button { margin-top: -2px; }
.dlg-title svg { width: 12px; height: 12px; }
.dlg-body { flex: 1; min-height: 0; display: flex; overflow: hidden; }
.dlg-content { flex: 1; min-width: 0; height: 700px; margin: 0 17px 0 13px; padding: 0 20px 0 25px; border: 1px solid #a6c9e2; border-width: 0 1px; }
.general { margin-top: -24px; padding-bottom: 9px; }
.general > legend { width: 105px; }
.g-row { display: flex; align-items: center; padding: 5px 0 4px; border-bottom: 1px solid #ccc; }
.g-row.first { padding-top: 10px; }
.g-row.last { border: 0; }
.g-row label { width: 170px; padding: 3px 0 0 5px; font-size: 11px; font-weight: 700; }
.g-row.first label { padding-top: 0; }
.w255 { width: 254px; margin-right: 3px; }
.w153 { width: 153px; font: 13px var(--arial); }
.btn { height: 27px; padding: 0 10px; border: 1px solid #aaa; border-radius: 6px; font: bold 11px/20px var(--ui); color: #2e6e9e; white-space: nowrap; background: linear-gradient(#e9f4fe 50%, #dbecfa 50%, #ebf5fe); }
.g-row .btn { width: 105px; padding: 0; }
.sel { position: relative; width: 200px; height: 19px; }
.sel::after { content: ""; position: absolute; right: 6px; top: 6px; border: 3px solid transparent; border-top: 6px solid #000; border-bottom: 0; }
.sel select { appearance: none; width: 100%; height: 19px; padding: 0 4px; background: #fff; border: 1px solid #a9a9a9; border-radius: 2px; font: 12px/16px var(--ui); }

.scan { margin-top: 20px; padding: 18px 10px 30px; }
.s-row { display: grid; grid-template-columns: 267px 279px 1fr; height: 25px; padding: 1px 0 0 27px; align-items: start; }
.s-row label { font: 11px/16px var(--verdana); padding-top: 5px; white-space: nowrap; }
.date { display: flex; }
.date input { width: 132px; height: 19px; border: 1px solid #a9a9a9; background: #fff; }
.date svg { width: 22px; height: 24px; margin: -1px 0 0 1px; }
.sub { margin: 9px 0 0 25px; }
.mammo { margin-top: 8px; position: relative; padding: 18px 10px 11px; }
.mammo .s-row { grid-template-columns: 267px 243px 1fr; }
.with-btn { display: flex; }
.with-btn label { width: 141px; }
.with-btn .btn { width: 89px; height: 26px; padding: 0; }
.mark { position: absolute; left: 168px; top: 1px; width: 112px; height: 64px; }
.biopsy { padding: 14px 10px 19px; }
.picker { display: flex; padding-left: 7px; }
.pick-col { width: 200px; white-space: nowrap; }
.pick-col label { display: block; height: 16px; }
.pick-btns { width: 106px; padding: 24px 29px 0 35px; }
.pick-btns button { width: 42px; height: 42px; margin-bottom: 6px; display: block; }
.pick-btns svg { width: 42px; height: 42px; }
.back svg { transform: scaleX(-1); }
.listbox { display: flex; height: 120px; border: 1px solid #a9a9a9; background: #fff; }
.listbox select { flex: 1; min-width: 0; height: 118px; overflow: hidden; border: 0; padding: 0; background: none; outline: 0; }
.listbox option { height: 16px; min-height: 16px; line-height: 16px; padding: 0 2px; }
.dlg-foot { flex: none; height: 47px; margin-top: 6px; padding: 10px 17px 0; display: flex; justify-content: flex-end; gap: 5px; border-top: 1px solid #a6c9e2; }
.dlg-foot .btn { height: 28px; }

/* Taskbar */
.taskbar { flex: none; height: 40px; display: flex; gap: 4px; padding: 0 20px 0 17px; border-top: 1px solid #9a6b5e; background: linear-gradient(98deg, transparent 77%, #b36b4a 78%, transparent 79%), linear-gradient(#c48775, #bd8070); }
.taskbar button { width: 58px; height: 39px; display: flex; align-items: center; justify-content: center; }
.taskbar button svg { width: 32px; height: 32px; }
.taskbar .open { background: rgba(255, 255, 255, .22); border: 1px solid rgba(255, 255, 255, .45); }
.taskbar .lit { background: linear-gradient(135deg, #dbb9b0, #cfaaa1); border-color: #fff; }
.tray { margin-left: auto; display: flex; align-items: center; gap: 8px; }
.t12 { width: 12px; height: 10px; }
.t16 { width: 16px; height: 16px; }
.clock { width: 70px; margin: 0 -6px 0 4px; color: #fff; text-align: center; font-size: 12px; line-height: 17px; display: flex; flex-direction: column; }
.clock { font-family: Roboto, sans-serif; }
```
